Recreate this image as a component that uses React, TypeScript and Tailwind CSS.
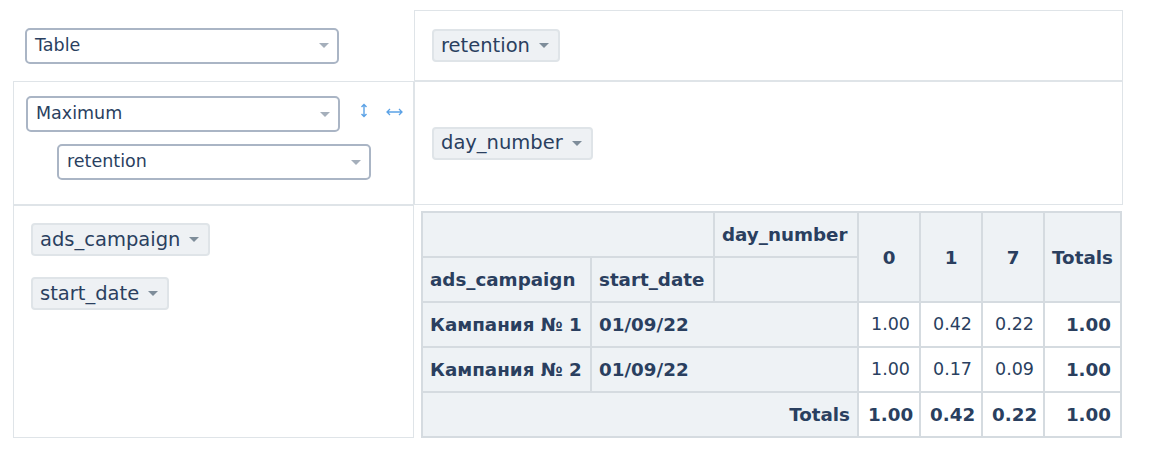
import React from "react";

const Caret = ({ className }: { className?: string }) => (
  <svg width="10" height="5" viewBox="0 0 10 5" className={className}>
    <path d="M0 0H10L5 5Z" fill="currentColor" />
  </svg>
);

function Select({ label }: { label: string }) {
  return (
    <div className="flex h-[36px] w-[314px] items-center justify-between rounded-[5px] border-2 border-[#aab5c5] bg-white pl-[8px] pr-[8px] text-[17.5px] leading-none">
      <span>{label}</span>
      <Caret className="text-[#a5afbb]" />
    </div>
  );
}

function Chip({ label }: { label: string }) {
  return (
    <div className="inline-flex h-[33px] items-center gap-[9px] rounded-[4px] border-2 border-[#dfe4e8] bg-[#eef1f4] pl-[7px] pr-[9px] text-[19.5px] leading-none">
      <span>{label}</span>
      <Caret className="text-[#7e8d9a]" />
    </div>
  );
}

const th = "border-2 border-[#d5dbe0] bg-[#eef2f5] px-[7px] text-[18.3px] font-bold";
const td = "border-2 border-[#d5dbe0] bg-white px-[9px] text-right";
const tdb = "border-2 border-[#d5dbe0] bg-white px-[9px] text-right text-[18.3px] font-bold";

export default function App() {
  return (
    <div className="min-h-[458px] bg-white pl-[13px] pt-[10px] font-['DejaVu_Sans',Verdana,sans-serif] text-[#2a3f5f]">
      <div className="grid grid-cols-[401px_709px] grid-rows-[71px_124px_233px]">
        <div className="flex items-center pl-[12px]">
          <Select label="Table" />
        </div>
        <div className="flex items-center border border-[#dfe4e8] pl-[17px]">
          <Chip label="retention" />
        </div>

        <div className="border border-[#dfe4e8] pl-[12px] pt-[14px]">
          <div className="flex items-start">
            <Select label="Maximum" />
            <svg width="8" height="15" viewBox="0 0 8 15" className="ml-[20px] mt-[7px] text-[#5ba2e6]">
              <path d="M4 1.5V13.5M1.5 4L4 1.5L6.5 4M1.5 11L4 13.5L6.5 11" fill="none" stroke="currentColor" strokeWidth="1.4" />
            </svg>
            <svg width="17" height="8" viewBox="0 0 17 8" className="ml-[18px] mt-[12px] text-[#5ba2e6]">
              <path d="M1 4H16M4 1L1 4L4 7M13 1L16 4L13 7" fill="none" stroke="currentColor" strokeWidth="1.3" />
            </svg>
          </div>
          <div className="mt-[12px] pl-[31px]">
            <Select label="retention" />
          </div>
        </div>
        <div className="flex items-center border border-[#dfe4e8] pl-[17px]">
          <Chip label="day_number" />
        </div>

        <div className="flex flex-col items-start gap-[21px] border border-[#dfe4e8] pl-[17px] pt-[17px]">
          <Chip label="ads_campaign" />
          <Chip label="start_date" />
        </div>
        <div className="pl-[7px] pt-[6px]">
          <table className="w-[701px] table-fixed border-collapse text-left text-[17.5px] leading-[21px]">
            <colgroup>
              <col className="w-[169px]" />
              <col className="w-[123px]" />
              <col className="w-[144px]" />
              <col className="w-[62px]" />
              <col className="w-[62px]" />
              <col className="w-[62px]" />
              <col className="w-[77px]" />
            </colgroup>
            <thead>
              <tr className="h-[45px]">
                <th colSpan={2} className={th}></th>
                <th className={th + " whitespace-nowrap"}>day_number</th>
                <th rowSpan={2} className={th + " text-center"}>0</th>
                <th rowSpan={2} className={th + " text-center"}>1</th>
                <th rowSpan={2} className={th + " text-center"}>7</th>
                <th rowSpan={2} className={th + " text-center"}>Totals</th>
              </tr>
              <tr className="h-[45px]">
                <th className={th}>ads_campaign</th>
                <th className={th}>start_date</th>
                <th className={th}></th>
              </tr>
            </thead>
            <tbody>
              <tr className="h-[45px]">
                <th className={th + " whitespace-nowrap"}>Кампания № 1</th>
                <th colSpan={2} className={th}>01/09/22</th>
                <td className={td}>1.00</td>
                <td className={td}>0.42</td>
                <td className={td}>0.22</td>
                <td className={tdb}>1.00</td>
              </tr>
              <tr className="h-[45px]">
                <th className={th + " whitespace-nowrap"}>Кампания № 2</th>
                <th colSpan={2} className={th}>01/09/22</th>
                <td className={td}>1.00</td>
                <td className={td}>0.17</td>
                <td className={td}>0.09</td>
                <td className={tdb}>1.00</td>
              </tr>
              <tr className="h-[45px]">
                <th colSpan={3} className={th + " text-right"}>Totals</th>
                <td className={tdb}>1.00</td>
                <td className={tdb}>0.42</td>
                <td className={tdb}>0.22</td>
                <td className={tdb}>1.00</td>
              </tr>
            </tbody>
          </table>
        </div>
      </div>
    </div>
  );
}
